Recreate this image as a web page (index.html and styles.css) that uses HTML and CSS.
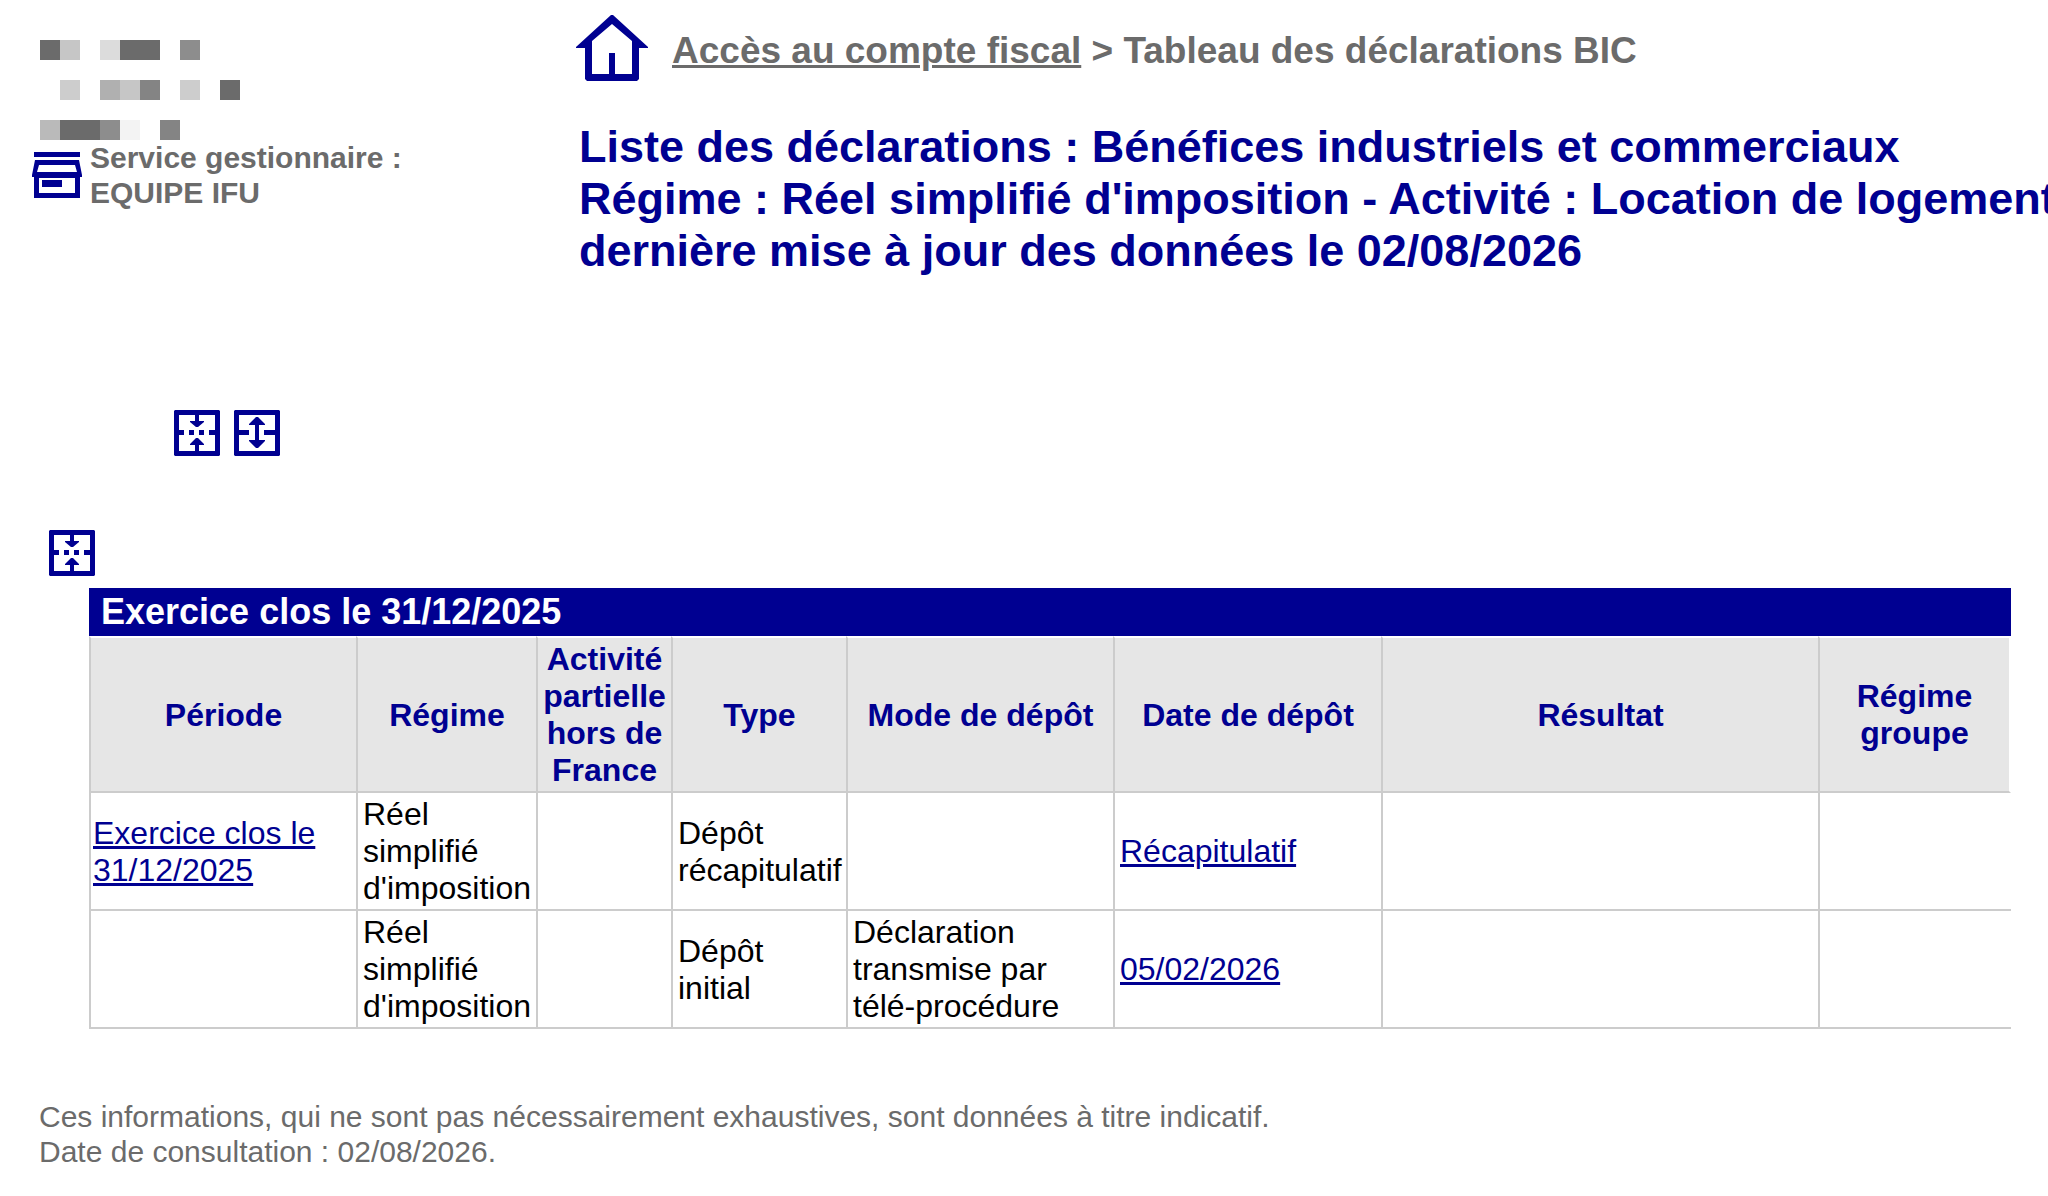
FILE: index.html
```html
<!DOCTYPE html>
<html lang="fr">
<head>
    <meta charset="UTF-8">
    <meta name="viewport" content="width=device-width, initial-scale=1.0">
    <title>Tableau des déclarations BIC</title>
    <link rel="stylesheet" href="styles.css">
</head>

<body>
    <!-- shared icons -->
    <svg class="sprite" aria-hidden="true">
        <symbol id="collapse" viewBox="0 0 46 46">
            <path fill-rule="evenodd" d="M1 0H45L46 1V45L45 46H1L0 45V1ZM5 5V41H41V5Z"/>
            <path d="M21 5H25V11H30V12L24 17H22L16 12V11H21ZM21 41H25V35H30V34L24 28H22L16 34V35H21Z"/>
            <path d="M5 20H10V25H5ZM15 20H20V25H15ZM25 20H30V25H25ZM35 20H41V25H35Z"/>
        </symbol>
        <symbol id="expand" viewBox="0 0 46 46">
            <path fill-rule="evenodd" d="M1 0H45L46 1V45L45 46H1L0 45V1ZM5 5V41H41V5Z"/>
            <path d="M22 7H24L31 14V15H25V30H31V31L24 38H22L15 31V30H21V15H15V14Z"/>
            <path d="M5 20H15V25H5ZM30 20H41V25H30Z"/>
        </symbol>
    </svg>

    <header class="header">
        <div class="identity">
            <svg class="mosaic" viewBox="0 0 200 100" shape-rendering="crispEdges" aria-hidden="true">
                <path fill="#6b6b6b" d="M0 0h20v20h-20zM80 0h40v20h-40zM180 40h20v20h-20zM20 80h40v20h-40z"/>
                <path fill="#8d8d8d" d="M140 0h20v20h-20zM60 80h20v20h-20z"/>
                <path fill="#848484" d="M100 40h20v20h-20zM120 80h20v20h-20z"/>
                <path fill="#c6c6c6" d="M20 0h20v20h-20zM80 40h20v20h-20z"/>
                <path fill="#cdcdcd" d="M20 40h20v20h-20zM140 40h20v20h-20z"/>
                <path fill="#b0b0b0" d="M60 40h20v20h-20z"/>
                <path fill="#bababa" d="M0 80h20v20h-20z"/>
                <path fill="#dcdcdc" d="M60 0h20v20h-20z"/>
                <path fill="#f3f3f3" d="M80 80h20v20h-20z"/>
            </svg>
            <div class="service">
                <svg class="service-icon" viewBox="0 0 50 46" aria-hidden="true">
                    <path fill-rule="evenodd" d="M2 0H48V5H2ZM3 8H47L50 23V25H48V46H2V25H0V23ZM7 13L5 20H45L43 13ZM7 26V41H43V26Z"/>
                    <path d="M10 28H30V35H10Z"/>
                </svg>
                <p>Service gestionnaire :<br>EQUIPE IFU</p>
            </div>
        </div>

        <div class="heading">
            <nav class="breadcrumb">
                <a class="home" href="#" aria-label="Accueil">
                    <svg viewBox="0 0 72 74">
                        <path fill-rule="evenodd" d="M35 1H37L72 33V34H63V65L61 67H11L9 65V34H0V33ZM36 10L16 27V60H33V39H39V60H56V27Z"/>
                    </svg>
                </a>
                <p><a href="#">Accès au compte fiscal</a> &gt; Tableau des déclarations BIC</p>
            </nav>
            <h1>Liste des déclarations : Bénéfices industriels et commerciaux<br>
                Régime : Réel simplifié d'imposition - Activité : Location de logement<br>
                dernière mise à jour des données le 02/08/2026</h1>
        </div>
    </header>

    <main>
        <div class="toolbar">
            <button class="icon-button" type="button" aria-label="Tout replier"><svg><use href="#collapse"/></svg></button>
            <button class="icon-button" type="button" aria-label="Tout déplier"><svg><use href="#expand"/></svg></button>
        </div>

        <section class="exercice">
            <button class="icon-button" type="button" aria-label="Replier l'exercice"><svg><use href="#collapse"/></svg></button>
            <table class="declarations">
                <caption>Exercice clos le 31/12/2025</caption>
                <colgroup>
                    <col class="col-periode">
                    <col class="col-regime">
                    <col class="col-activite">
                    <col class="col-type">
                    <col class="col-mode">
                    <col class="col-date">
                    <col>
                    <col class="col-groupe">
                </colgroup>
                <thead>
                    <tr>
                        <th scope="col">Période</th>
                        <th scope="col">Régime</th>
                        <th scope="col">Activité partielle hors de France</th>
                        <th scope="col">Type</th>
                        <th scope="col">Mode de dépôt</th>
                        <th scope="col">Date de dépôt</th>
                        <th scope="col">Résultat</th>
                        <th scope="col">Régime<br>groupe</th>
                    </tr>
                </thead>
                <tbody>
                    <tr>
                        <td><a href="#">Exercice clos le 31/12/2025</a></td>
                        <td>Réel simplifié d'imposition</td>
                        <td></td>
                        <td>Dépôt récapitulatif</td>
                        <td></td>
                        <td><a href="#">Récapitulatif</a></td>
                        <td></td>
                        <td></td>
                    </tr>
                    <tr>
                        <td></td>
                        <td>Réel simplifié d'imposition</td>
                        <td></td>
                        <td>Dépôt<br>initial</td>
                        <td>Déclaration transmise par<br>télé-procédure</td>
                        <td><a href="#">05/02/2026</a></td>
                        <td></td>
                        <td></td>
                    </tr>
                </tbody>
            </table>
        </section>
    </main>

    <footer class="footer">
        <p>Ces informations, qui ne sont pas nécessairement exhaustives, sont données à titre indicatif.</p>
        <p>Date de consultation : 02/08/2026.</p>
    </footer>
</body>
</html>
```

FILE: styles.css
```css
body {
    margin: 0;
    padding: 0;
    background-color: #fff;
    color: #000;
    font-family: "Liberation Sans", Arial, Helvetica, sans-serif;
    overflow-x: hidden;
}

p {
    margin: 0;
}

svg {
    display: block;
    fill: #000091;
}

.sprite {
    display: none;
}

/* header */
.header {
    display: grid;
    grid-template-columns: 579px 1fr;
    color: #6b6b6b;
}

.identity {
    padding-top: 40px;
}

.mosaic {
    width: 200px;
    height: 100px;
    margin-left: 40px;
}

.service {
    display: flex;
    align-items: center;
    gap: 8px;
    margin-left: 32px;
    font-size: 30px;
    font-weight: bold;
    line-height: 35px;
}

.service-icon {
    width: 50px;
    height: 46px;
}

.heading {
    min-width: 0;
    padding-top: 14px;
}

.breadcrumb {
    display: flex;
    align-items: center;
    gap: 24px;
    margin-left: -3px;
    font-size: 37px;
    font-weight: bold;
    line-height: 42px;
}

.breadcrumb a {
    color: #6b6b6b;
}

.home svg {
    width: 72px;
    height: 74px;
}

h1 {
    margin: 33px 0 0;
    color: #000091;
    font-size: 45px;
    line-height: 52px;
    white-space: nowrap;
}

/* fold / unfold buttons */
.toolbar {
    display: flex;
    gap: 14px;
    margin: 133px 0 74px 174px;
}

.icon-button {
    display: block;
    padding: 0;
    border: none;
    background: none;
    cursor: pointer;
}

.icon-button svg {
    width: 46px;
    height: 46px;
}

.exercice {
    margin: 0 37px 0 89px;
}

.exercice .icon-button {
    margin: 0 0 12px -40px;
}

/* table */
.declarations {
    width: 100%;
    table-layout: fixed;
    border-spacing: 0;
    font-size: 32px;
    line-height: 37px;
}

.declarations caption {
    padding-left: 12px;
    background-color: #000091;
    color: #fff;
    font-size: 36px;
    font-weight: bold;
    line-height: 48px;
    text-align: left;
}

.declarations th,
.declarations td {
    border-left: 2px solid #ccc;
    border-bottom: 2px solid #ccc;
}

.declarations th {
    padding: 3px 0 2px;
    border-top: 2px solid #fff;
    background-color: #e6e6e6;
    color: #000091;
}

.declarations th:last-child {
    border-right: 2px solid #fff;
}

.declarations td {
    padding: 3px 0 2px 5px;
}

.declarations td:first-child {
    padding-left: 2px;
}

.declarations a {
    color: #000091;
}

.col-periode,
.col-mode {
    width: 267px;
}

.col-regime {
    width: 180px;
}

.col-activite {
    width: 135px;
}

.col-type {
    width: 175px;
}

.col-date {
    width: 268px;
}

.col-groupe {
    width: 193px;
}

.footer {
    margin: 70px 39px 27px;
    color: #6b6b6b;
    font-size: 30px;
    line-height: 35px;
}
```
